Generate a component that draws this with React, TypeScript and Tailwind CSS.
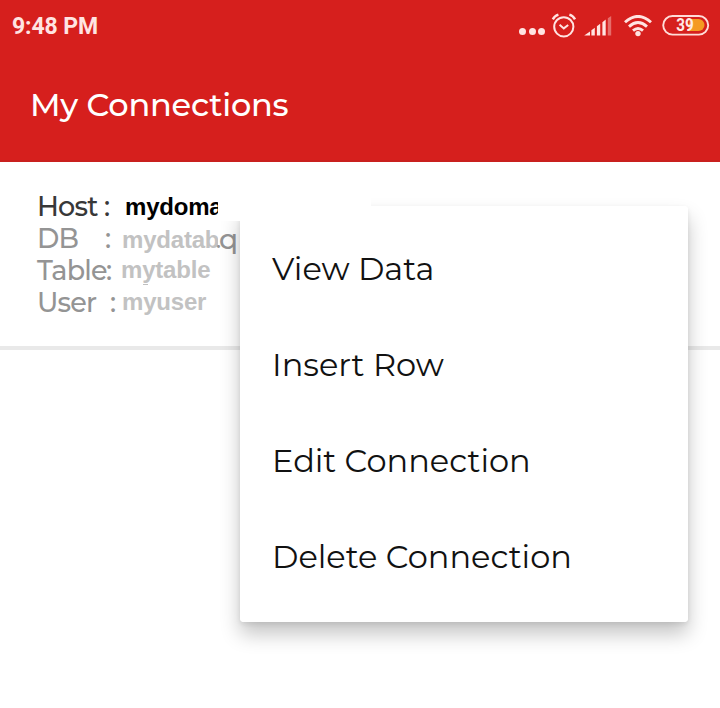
const menuItems = ['View Data', 'Insert Row', 'Edit Connection', 'Delete Connection'];

function AlarmIcon() {
  return (
    <svg width="26" height="26" viewBox="0 0 26 26" fill="none" stroke="#ffe4e2" strokeWidth="2">
      <circle cx="12.8" cy="13.8" r="9.6" />
      <path d="M8.6 11.8l4.2 3.6 4.4-3.4" />
      <path d="M1.8 6.4Q3.6 2.8 7.4 1.6M24 6.4Q22.2 2.8 18.4 1.6" strokeWidth="2.4" />
    </svg>
  );
}

function SignalIcon() {
  return (
    <svg width="29" height="20" viewBox="0 0 29 20" fill="#ffe4e2">
      <path d="M.2 19.5L6 15.4V19.5ZM7.4 14.3L10.8 11.8V19.5H7.4ZM12.9 10.3L16.2 7.7V19.5H12.9ZM18.4 6.3L21.7 3.6V19.5H18.4Z" />
      <path d="M23.8 2.2L27.2 0V19.5H23.8Z" fillOpacity=".4" />
    </svg>
  );
}

function WifiIcon() {
  return (
    <svg width="28" height="22" viewBox="0 0 28 22" fill="none" stroke="#ffe4e2" strokeWidth="2.9">
      <path d="M1 7.3Q14-4.5 27 7.3M5 11.6Q14 3.6 23 11.6M9 15.6Q14 11.2 19 15.6" />
      <circle cx="14" cy="18.6" r="2.7" fill="#ffe4e2" stroke="none" />
    </svg>
  );
}

function Battery() {
  return (
    <svg width="48" height="22" viewBox="0 0 48 22">
      <path d="M28 4H36.5A6 6 0 0 1 36.5 16H26Z" fill="#f49a22" />
      <rect x="1.2" y="1" width="45" height="18.6" rx="9.3" fill="none" stroke="#ffdcd8" strokeWidth="1.9" />
      <text x="14.2" y="16.4" fill="#ffeae7" fontFamily="Roboto, sans-serif" fontSize="18.5" fontWeight="700" textLength="17.5" lengthAdjust="spacingAndGlyphs">39</text>
    </svg>
  );
}

export default function App() {
  return (
    <main className="relative h-[708px] w-[720px] overflow-hidden bg-white font-[Montserrat,Inter,sans-serif]">
      <header className="h-[162px] border-b-2 border-[#c9201e] bg-[#d61f1d]">
        <div className="flex h-[52px] items-center justify-between pl-3 pr-[10px]">
          <span className="font-[Roboto,sans-serif] text-[23px] font-bold leading-none tracking-[-0.1px] text-[#ffe4e2]">9:48 PM</span>
          <div className="flex items-center">
            <div className="mr-[6px] mt-[10px] flex gap-[2.5px]">
              <i className="size-[7px] rounded-full bg-[#ffe4e2]" />
              <i className="size-[7px] rounded-full bg-[#ffe4e2]" />
              <i className="size-[7px] rounded-full bg-[#ffe4e2]" />
            </div>
            <AlarmIcon />
            <div className="ml-[7px] mr-[11px]"><SignalIcon /></div>
            <WifiIcon />
            <div className="ml-[10px]"><Battery /></div>
          </div>
        </div>
        <h1 className="pl-[30px] pt-[32px] text-[32px] font-medium leading-[42px] tracking-[-0.22px] text-white">My Connections</h1>
      </header>

      <section className="h-[188px] border-b-4 border-[#e9e9e9] pl-[37px] pt-[29px] text-[27px] font-medium leading-8 tracking-[-0.8px] text-[#949494]">
        <div className="flex h-8 text-[#383838]">
          <span className="w-[67px]">Host</span><span className="w-[21px]">:</span>
          <b className="w-[93px] overflow-hidden whitespace-nowrap font-['Liberation_Sans',sans-serif] text-[24px] tracking-[-0.2px] text-black">mydoma</b>
        </div>
        <div className="flex h-8">
          <span className="w-[68px]">DB</span><span className="w-[17px]">:</span>
          <b className="w-[96px] overflow-hidden whitespace-nowrap pt-px font-['Liberation_Sans',sans-serif] text-[24px] tracking-[-0.2px] text-[#c2c2c2]">mydatab</b>
          <span className="-ml-[2px] w-[3px] pt-[2px] text-[22px]">.</span>
          <span className="text-[28px]">q</span>
        </div>
        <div className="flex h-8">
          <span className="w-[69px]">Table</span><span className="w-[15px]">:</span>
          <b className="-mt-px font-['Liberation_Sans',sans-serif] text-[24px] tracking-[-0.2px] text-[#c2c2c2]">mytable</b>
        </div>
        <div className="flex h-8">
          <span className="w-[73px]">User</span><span className="w-[12px]">:</span>
          <b className="-mt-px font-['Liberation_Sans',sans-serif] text-[24px] tracking-[-0.2px] text-[#c2c2c2]">myuser</b>
        </div>
      </section>

      <div className="absolute left-[143px] top-[284px] h-px w-[5px] bg-[#c0c0c0]" />
      <div className="absolute left-[240px] top-[206px] h-[416px] w-[448px] rounded shadow-[0_12px_20px_rgba(0,0,0,.23),0_2px_5px_rgba(0,0,0,.08)]" />
      <div className="absolute left-[219px] top-[194px] h-[27px] w-[152px] bg-white" />
      <nav className="absolute left-[240px] top-[206px] h-[416px] w-[448px] rounded bg-white py-[15px]">
        {menuItems.map((label) => (
          <button key={label} className="flex h-24 w-full items-center pb-px pl-8 text-left text-[32px] font-normal text-[#111]">
            {label}
          </button>
        ))}
      </nav>
    </main>
  );
}
